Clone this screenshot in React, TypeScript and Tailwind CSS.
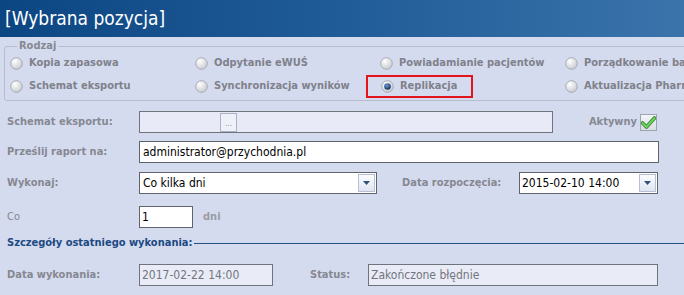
import type { ReactNode } from "react";

const font = { fontFamily: '"DejaVu Sans Condensed", "Liberation Sans", sans-serif' };

function Radio({ checked }: { checked?: boolean }) {
  return (
    <svg width="13" height="13" viewBox="0 0 13 13" className="shrink-0">
      <defs>
        <radialGradient id="rg" cx="0.35" cy="0.3" r="0.8">
          <stop offset="0" stopColor="#ffffff" />
          <stop offset="1" stopColor="#c4c6cc" />
        </radialGradient>
        <radialGradient id="rd" cx="0.4" cy="0.35" r="0.7">
          <stop offset="0" stopColor="#6d9ad4" />
          <stop offset="1" stopColor="#0f2c57" />
        </radialGradient>
      </defs>
      <circle cx="6.5" cy="6.5" r="5.8" fill="url(#rg)" stroke="#a3a6ae" strokeWidth="0.9" />
      {checked && <circle cx="6.5" cy="6.5" r="3.3" fill="url(#rd)" />}
    </svg>
  );
}

function Option({ label, checked, boxed }: { label: string; checked?: boolean; boxed?: boolean }) {
  return (
    <div className="w-[185px] shrink-0 h-[23px] flex items-center">
      <div
        className={
          boxed
            ? "flex items-center gap-[6px] h-[23px] pl-[13px] pr-[14px] -ml-[14px] border-2 border-[#e3151b]"
            : "flex items-center gap-[6px]"
        }
      >
        <Radio checked={checked} />
        <span className="text-[11px] font-bold text-[#7f818b] whitespace-nowrap">{label}</span>
      </div>
    </div>
  );
}

function Label({ children, w = "w-[139px]" }: { children: ReactNode; w?: string }) {
  return (
    <div className={`${w} shrink-0 pl-[7px] text-[11px] font-bold text-[#868892] whitespace-nowrap`}>
      {children}
    </div>
  );
}

function DropArrow() {
  return (
    <div className="w-[17px] h-[18px] mr-[1px] flex items-center justify-center border border-[#b7bfd2] bg-gradient-to-b from-[#fbfcfe] to-[#dfe5f1]">
      <svg width="7" height="4" viewBox="0 0 7 4">
        <path d="M0 0 H7 L3.5 4 Z" fill="#2f4f7d" />
      </svg>
    </div>
  );
}

function CheckBox() {
  return (
    <div className="w-[17px] h-[17px] border border-[#9ea3ae] bg-gradient-to-b from-[#f4f6f8] to-[#d8dde4] flex items-center justify-center">
      <svg width="15" height="13" viewBox="0 0 15 13">
        <path
          d="M1.5 7 L5.5 11 L13.5 2"
          fill="none"
          stroke="#2f7f2f"
          strokeWidth="3.6"
          strokeLinecap="round"
          strokeLinejoin="round"
        />
        <path
          d="M1.5 7 L5.5 11 L13.5 2"
          fill="none"
          stroke="#6fd45a"
          strokeWidth="2"
          strokeLinecap="round"
          strokeLinejoin="round"
        />
      </svg>
    </div>
  );
}

export default function App() {
  return (
    <div className="w-[684px] h-[295px] overflow-hidden bg-[#d5dbef]" style={font}>
      {/* Header */}
      <div className="h-[37px] bg-gradient-to-r from-[#0b4683] via-[#205c98] to-[#3b74ab] flex items-center pl-[5px]">
        <span className="text-white text-[19px] leading-none whitespace-nowrap">[Wybrana pozycja]</span>
      </div>

      {/* Rodzaj */}
      <fieldset className="ml-[4px] mt-[3px] w-[760px] border border-[#b8bccb] rounded-[3px] pl-[5px] pt-0 pb-[2px]">
        <legend className="ml-[7px] px-[2px] text-[11px] font-bold text-[#868892] leading-[12px]">Rodzaj</legend>
        <div className="flex">
          <Option label="Kopia zapasowa" />
          <Option label="Odpytanie eWUŚ" />
          <Option label="Powiadamianie pacjentów" />
          <Option label="Porządkowanie bazy danych" />
        </div>
        <div className="flex">
          <Option label="Schemat eksportu" />
          <Option label="Synchronizacja wyników" />
          <Option label="Replikacja" checked boxed />
          <Option label="Aktualizacja Pharmindex" />
        </div>
      </fieldset>

      {/* Schemat eksportu */}
      <div className="flex items-center mt-[10px] h-[22px]">
        <Label>Schemat eksportu:</Label>
        <div className="w-[414px] h-[22px] border border-[#6f737c] bg-[#e8ebf7] flex items-center pl-[80px]">
          <div className="w-[17px] h-[19px] border border-[#aab2c6] bg-[#eef1f8] flex items-end justify-center pb-[3px]">
            <span className="text-[8px] leading-none text-[#8a8ea0]">...</span>
          </div>
        </div>
        <div className="flex-1 flex items-center justify-end gap-[3px] pr-[27px]">
          <span className="text-[11px] font-bold text-[#868892]">Aktywny</span>
          <CheckBox />
        </div>
      </div>

      {/* Prześlij raport */}
      <div className="flex items-center mt-[8px] h-[22px]">
        <Label>Prześlij raport na:</Label>
        <div className="w-[520px] h-[22px] border border-[#5f636b] bg-white flex items-center pl-[3px]">
          <span className="text-[12px] text-black">administrator@przychodnia.pl</span>
        </div>
      </div>

      {/* Wykonaj */}
      <div className="flex items-center mt-[9px] h-[22px]">
        <Label>Wykonaj:</Label>
        <div className="w-[238px] h-[22px] border border-[#5f636b] bg-white flex items-center justify-between pl-[3px]">
          <span className="text-[12px] text-black">Co kilka dni</span>
          <DropArrow />
        </div>
        <div className="w-[142px] shrink-0 pl-[25px] text-[11px] font-bold text-[#868892] whitespace-nowrap">
          Data rozpoczęcia:
        </div>
        <div className="w-[139px] h-[22px] border border-[#5f636b] bg-white flex items-center justify-between pl-[2px]">
          <span className="text-[12px] text-black">2015-02-10 14:00</span>
          <DropArrow />
        </div>
      </div>

      {/* Co */}
      <div className="flex items-center mt-[12px] h-[22px]">
        <div className="w-[139px] shrink-0 pl-[7px] text-[11px] text-[#868892]">Co</div>
        <div className="w-[54px] h-[22px] border border-[#5f636b] bg-white flex items-center pl-[2px]">
          <span className="text-[12px] text-black">1</span>
        </div>
        <span className="ml-[10px] text-[11px] font-bold text-[#9a9ca6]">dni</span>
      </div>

      {/* Szczegóły */}
      <div className="flex items-center mt-[9px] h-[12px] pl-[7px]">
        <span className="text-[11px] font-bold text-[#1b4a82] whitespace-nowrap">Szczegóły ostatniego wykonania:</span>
        <div className="flex-1 ml-[2px] border-t border-[#24507f] h-0" />
      </div>

      {/* Data wykonania */}
      <div className="flex items-center mt-[15px] h-[22px]">
        <Label>Data wykonania:</Label>
        <div className="w-[134px] h-[22px] border border-[#6f737c] bg-[#e9ecf7] flex items-center pl-[2px]">
          <span className="text-[12px] text-[#73757d]">2017-02-22 14:00</span>
        </div>
        <div className="w-[95px] shrink-0 pl-[37px] text-[11px] font-bold text-[#868892]">Status:</div>
        <div className="w-[290px] h-[22px] border border-[#6f737c] bg-[#e9ecf7] flex items-center pl-[2px]">
          <span className="text-[12px] text-[#73757d]">Zakończone błędnie</span>
        </div>
      </div>
    </div>
  );
}
